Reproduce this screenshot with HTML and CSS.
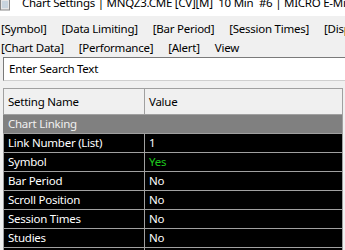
FILE: index.html
```html
<!DOCTYPE html>
<html lang="en">
<head>
    <meta charset="UTF-8">
    <meta name="viewport" content="width=device-width, initial-scale=1.0">
    <title>Chart Settings</title>
    <link rel="stylesheet" href="styles.css">
</head>
<body>

<div class="window">
    <div class="titlebar">
        <svg class="app-icon" width="10" height="12" viewBox="0 0 10 12">
            <rect x="0.5" y="-2" width="9" height="12" fill="#e6e6e6" stroke="#8a8a8a"/>
            <rect x="2" y="1" width="6" height="7" fill="#c8d4de"/>
        </svg>
        <span class="title-text">Chart Settings | MNQZ3.CME [CV][M]&nbsp; 10 Min&nbsp; #6 | MICRO E-Mini Nasdaq</span>
    </div>

    <div class="menu">
        <div class="menu-row">
            <span>[Symbol]</span>
            <span>[Data Limiting]</span>
            <span>[Bar Period]</span>
            <span>[Session Times]</span>
            <span>[Display]</span>
        </div>
        <div class="menu-row">
            <span>[Chart Data]</span>
            <span>[Performance]</span>
            <span>[Alert]</span>
            <span>View</span>
        </div>
    </div>

    <!-- search field -->
    <div class="search">Enter Search Text</div>

    <table class="grid">
        <tr class="head">
            <td class="name">Setting Name</td>
            <td>Value</td>
        </tr>
        <tr class="group">
            <td colspan="2">Chart Linking</td>
        </tr>
        <tr><td class="name">Link Number (List)</td><td>1</td></tr>
        <tr><td class="name">Symbol</td><td class="yes">Yes</td></tr>
        <tr><td class="name">Bar Period</td><td>No</td></tr>
        <tr><td class="name">Scroll Position</td><td>No</td></tr>
        <tr><td class="name">Session Times</td><td>No</td></tr>
        <tr><td class="name">Studies</td><td>No</td></tr>
        <tr><td class="name">&nbsp;</td><td>&nbsp;</td></tr>
    </table>
</div>

</body>
</html>
```

FILE: styles.css
```css
body {
    margin: 0;
    font-family: 'Noto Sans', 'Open Sans', sans-serif;
    font-size: 11.5px;
    letter-spacing: -0.25px;
    color: #000;
    background: #f0f0f0;
    overflow: hidden;
}
.window {
    width: 345px;
    height: 250px;
    overflow: hidden;
}
.titlebar {
    height: 16px;
    background: #fff;
    display: flex;
    align-items: flex-start;
    white-space: nowrap;
    overflow: hidden;
}
.app-icon {
    flex: none;
    margin-right: 12px;
}
.title-text {
    margin-top: -5px;
    line-height: 16px;
}
.menu {
    padding-top: 3px;
}
.menu-row {
    display: flex;
    gap: 15px;
    height: 19px;
    line-height: 19px;
    padding-left: 1px;
    white-space: nowrap;
}
.search {
    margin-left: 3px;
    height: 22px;
    line-height: 22px;
    padding-left: 5px;
    background: #fff;
    border-top: 1px solid #7a7a7a;
    border-left: 1px solid #7a7a7a;
    border-bottom: 1px solid #cfcfcf;
}
.grid {
    margin: 7px 0 0 3px;
    width: 340px;
    border-collapse: collapse;
    table-layout: fixed;
}
.grid td {
    height: 18px;
    padding: 0 0 0 4px;
    border: 1px solid #a0a0a0;
    background: #000;
    color: #fff;
    line-height: 18px;
    white-space: nowrap;
    overflow: hidden;
}
.grid td.name {
    width: 136px;
}
.grid .head td {
    height: 25px;
    background: #f0f0f0;
    color: #000;
}
.grid .group td {
    background: #808080;
    color: #f0f0f0;
    border-left-color: #808080;
}
.grid td.yes {
    color: #1ec81e;
}
```
